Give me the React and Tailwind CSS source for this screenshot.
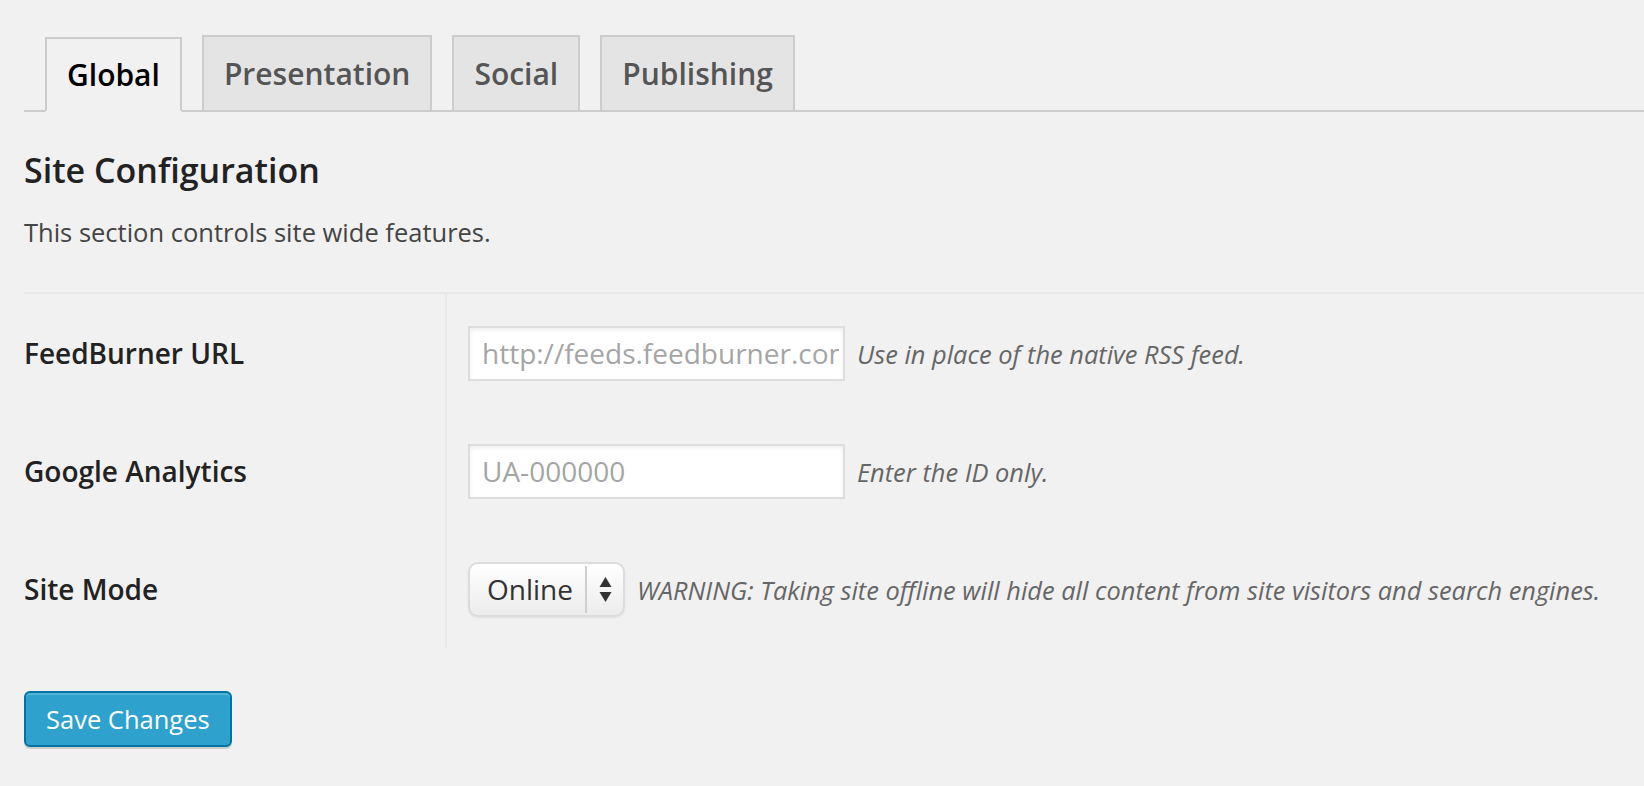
const tabs = ['Global', 'Presentation', 'Social', 'Publishing']

function Tabs({ active }) {
  return (
    <div className="flex items-end gap-[20px] border-b-2 border-[#cccccc] pl-[21px]">
      {tabs.map((t) => (
        <div
          key={t}
          className={`flex h-[75px] items-center border-2 px-[20px] text-[30px] font-semibold leading-none ${
            t === active
              ? '-mb-[2px] border-[#cccccc] border-b-[#f1f1f1] bg-[#f1f1f1] text-black'
              : 'h-[73px] border-b-0 border-[#cccccc] bg-[#e4e4e4] text-[#555555]'
          }`}
        >
          {t}
        </div>
      ))}
    </div>
  )
}

function Row({ label, children }) {
  return (
    <div className="flex h-[118px]">
      <div className="flex w-[423px] shrink-0 items-center border-r-2 border-[#e9e9e9] text-[28px] font-semibold text-[#222222]">
        {label}
      </div>
      <div className="flex flex-1 items-center pl-[21px]">{children}</div>
    </div>
  )
}

function Hint({ children }) {
  return <span className="ml-[12px] mt-[3px] text-[25.4px] italic text-[#666666]">{children}</span>
}

function TextInput({ placeholder }) {
  return (
    <input
      type="text"
      placeholder={placeholder}
      className="h-[55px] w-[377px] border-2 border-[#dddddd] bg-white pl-[12px] pr-[4px] text-[28px] text-[#333333] shadow-[inset_0_2px_4px_rgba(0,0,0,0.07)] outline-none placeholder:text-[#a5a5a5]"
    />
  )
}

function ModeSelect() {
  return (
    <div className="flex h-[55px] w-[157px] items-stretch rounded-[10px] border-2 border-[#dcdcdc] bg-gradient-to-b from-white to-[#ececec] shadow-[0_1px_2px_rgba(0,0,0,0.08)]">
      <span className="flex flex-1 items-center pl-[17px] text-[28px] text-[#333333]">Online</span>
      <span className="my-[2px] w-[2px] bg-[#cfcfcf]" />
      <span className="flex w-[36px] items-center justify-center">
        <svg width="13" height="25" viewBox="0 0 13 25">
          <path d="M6.5 0 L12.5 10 L0.5 10 Z" fill="#333" />
          <path d="M0.5 15 L12.5 15 L6.5 25 Z" fill="#333" />
        </svg>
      </span>
    </div>
  )
}

export default function App() {
  return (
    <div className="min-h-screen bg-[#f1f1f1] pl-[24px] pt-[35px] font-['Open_Sans',sans-serif] text-[#444444]">
      <Tabs active="Global" />

      <h3 className="mt-[34px] text-[34px] font-semibold leading-[48px] text-[#222222]">Site Configuration</h3>
      <p className="mt-[20px] text-[25.5px] leading-[36px] text-[#444444]">This section controls site wide features.</p>

      <div className="mt-[42px] border-t-2 border-[#e9e9e9]">
        <Row label="FeedBurner URL">
          <TextInput placeholder="http://feeds.feedburner.com/yoursite" />
          <Hint>Use in place of the native RSS feed.</Hint>
        </Row>
        <Row label="Google Analytics">
          <TextInput placeholder="UA-000000" />
          <Hint>Enter the ID only.</Hint>
        </Row>
        <Row label="Site Mode">
          <ModeSelect />
          <Hint>WARNING: Taking site offline will hide all content from site visitors and search engines.</Hint>
        </Row>
      </div>

      <button className="mt-[43px] h-[56px] rounded-[6px] border-2 border-[#0074a2] bg-[#2ea2cc] px-[20px] text-[25.5px] text-white shadow-[inset_0_2px_0_rgba(120,200,230,0.5),0_2px_0_rgba(0,0,0,0.15)]">
        Save Changes
      </button>
    </div>
  )
}
